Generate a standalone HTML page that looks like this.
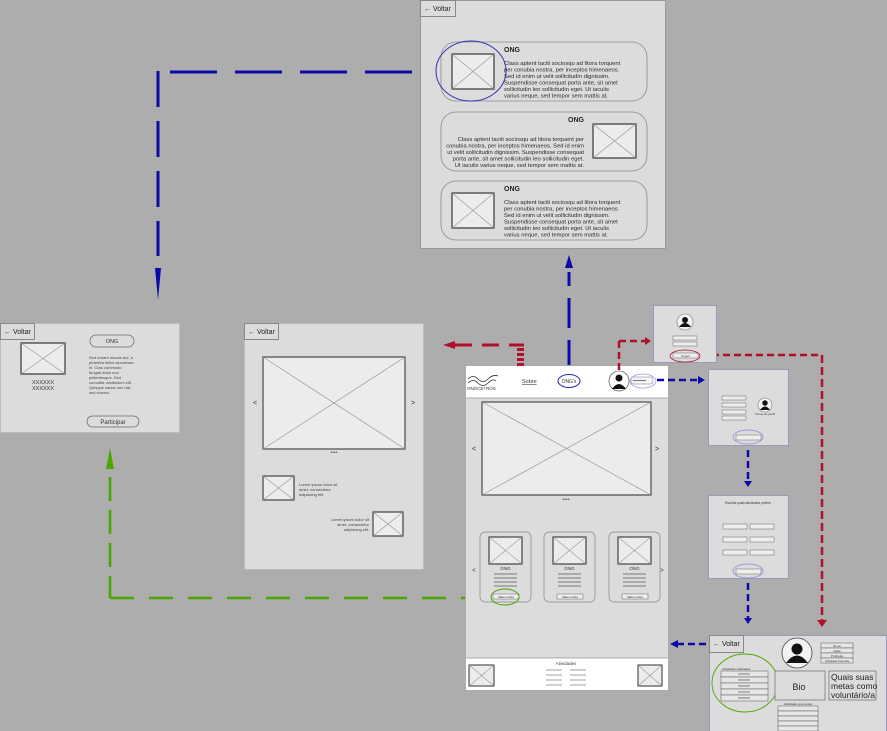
<!DOCTYPE html>
<html><head><meta charset="utf-8"><style>
html,body{margin:0;padding:0;background:#adadad}
svg{display:block}
text{font-family:"Liberation Sans",sans-serif}
</style></head><body>
<svg width="887" height="731" viewBox="0 0 887 731" xmlns="http://www.w3.org/2000/svg">
<rect width="887" height="731" fill="#adadad"/>

<!-- Top panel -->
<rect x="420.5" y="0.5" width="245" height="248" fill="#dcdcdc" stroke="#999"/>
<rect x="420.5" y="0.5" width="35" height="16" fill="#dcdcdc" stroke="#888"/>
<text x="424" y="11" font-size="7" fill="#222">← Voltar</text>
<g fill="none" stroke="#8a8a8a" stroke-width="0.8">
<rect x="441" y="42" width="206" height="59" rx="15"/>
<rect x="441" y="112" width="206" height="59" rx="15"/>
<rect x="441" y="181" width="206" height="59" rx="15"/>
</g>
<g stroke="#444" stroke-width="1.3" fill="#ececec">
<rect x="452" y="54" width="42" height="35"/>
<rect x="593" y="124" width="43" height="34"/>
<rect x="452" y="193" width="42" height="35"/>
</g>
<g stroke="#999" stroke-width="0.7">
<line x1="452" y1="54" x2="494" y2="89"/><line x1="494" y1="54" x2="452" y2="89"/>
<line x1="593" y1="124" x2="636" y2="158"/><line x1="636" y1="124" x2="593" y2="158"/>
<line x1="452" y1="193" x2="494" y2="228"/><line x1="494" y1="193" x2="452" y2="228"/>
</g>
<ellipse cx="471" cy="71" rx="35" ry="30" fill="none" stroke="#3333bb" stroke-width="1"/>
<g font-size="5.85" fill="#2a2a2a">
<text x="504" y="52" font-size="7" font-weight="bold" fill="#222">ONG</text>
<text x="504" y="65">Class aptent taciti sociosqu ad litora torquent</text>
<text x="504" y="71.5">per conubia nostra, per inceptos himenaeos.</text>
<text x="504" y="78">Sed id enim ut velit sollicitudin dignissim.</text>
<text x="504" y="84.5">Suspendisse consequat porta ante, sit amet</text>
<text x="504" y="91">sollicitudin leo sollicitudin eget. Ut iaculis</text>
<text x="504" y="97.5">varius neque, sed tempor sem mattis at.</text>
<g text-anchor="end">
<text x="584" y="122" font-size="7" font-weight="bold" fill="#222">ONG</text>
<text x="584" y="141">Class aptent taciti sociosqu ad litora torquent per</text>
<text x="584" y="147.5">conubia nostra, per inceptos himenaeos. Sed id enim</text>
<text x="584" y="154">ut velit sollicitudin dignissim. Suspendisse consequat</text>
<text x="584" y="160.5">porta ante, sit amet sollicitudin leo sollicitudin eget.</text>
<text x="584" y="167">Ut iaculis varius neque, sed tempor sem mattis at.</text>
</g>
<text x="504" y="191" font-size="7" font-weight="bold" fill="#222">ONG</text>
<text x="504" y="204">Class aptent taciti sociosqu ad litora torquent</text>
<text x="504" y="210.5">per conubia nostra, per inceptos himenaeos.</text>
<text x="504" y="217">Sed id enim ut velit sollicitudin dignissim.</text>
<text x="504" y="223.5">Suspendisse consequat porta ante, sit amet</text>
<text x="504" y="230">sollicitudin leo sollicitudin eget. Ut iaculis</text>
<text x="504" y="236.5">varius neque, sed tempor sem mattis at.</text>
</g>

<!-- Blue dashed top-left -->
<g stroke="#0a0aa8" stroke-width="3" fill="none">
<line x1="170" y1="72" x2="413" y2="72" stroke-dasharray="47,18"/>
<line x1="158" y1="71" x2="158" y2="256" stroke-dasharray="36,14"/>
<line x1="569" y1="370" x2="569" y2="272" stroke-dasharray="30,12"/>
</g>
<polygon points="155,268 161,268 158,300" fill="#0a0aa8"/>
<polygon points="565,268 573,268 569,255" fill="#0a0aa8"/>

<!-- Left panel 1 -->
<rect x="0.5" y="323.5" width="179" height="109" fill="#dcdcdc" stroke="#bbb"/>
<rect x="0.5" y="323.5" width="34" height="16" fill="#dcdcdc" stroke="#888"/>
<text x="4" y="334" font-size="7" fill="#222">← Voltar</text>
<rect x="21" y="343" width="44" height="31" fill="#ececec" stroke="#444" stroke-width="1.3"/>
<line x1="21" y1="343" x2="65" y2="374" stroke="#999" stroke-width="0.7"/><line x1="65" y1="343" x2="21" y2="374" stroke="#999" stroke-width="0.7"/>
<text x="43" y="384" font-size="5.5" fill="#333" text-anchor="middle">XXXXXX</text>
<text x="43" y="390" font-size="5.5" fill="#333" text-anchor="middle">XXXXXX</text>
<rect x="90" y="335" width="44" height="12" rx="6" fill="none" stroke="#666" stroke-width="0.7"/>
<text x="112" y="343" font-size="5.5" fill="#333" text-anchor="middle">ONG</text>
<g font-size="4" fill="#444">
<text x="89" y="359">Sed ornare mauris dui, a</text>
<text x="89" y="364">pharetra tellus accumsan</text>
<text x="89" y="369">in. Cras commodo</text>
<text x="89" y="374">feugiat dolor non</text>
<text x="89" y="379">pellentesque. Sed</text>
<text x="89" y="384">convallis vestibulum elit.</text>
<text x="89" y="389">Quisque varius nec nisi</text>
<text x="89" y="394">sed viverra.</text>
</g>
<rect x="87" y="416" width="52" height="11" rx="5.5" fill="none" stroke="#666" stroke-width="0.7"/>
<text x="113" y="424" font-size="6" fill="#333" text-anchor="middle">Participar</text>

<!-- Panel 2 -->
<rect x="244.5" y="323.5" width="179" height="246" fill="#dcdcdc" stroke="#bbb"/>
<rect x="244.5" y="323.5" width="34" height="16" fill="#dcdcdc" stroke="#888"/>
<text x="248" y="334" font-size="7" fill="#222">← Voltar</text>
<rect x="263" y="357" width="142" height="92" fill="#ececec" stroke="#555" stroke-width="1.3"/>
<line x1="263" y1="357" x2="405" y2="449" stroke="#999" stroke-width="0.7"/><line x1="405" y1="357" x2="263" y2="449" stroke="#999" stroke-width="0.7"/>
<text x="255" y="405" font-size="7" fill="#333" text-anchor="middle">&lt;</text>
<text x="413" y="405" font-size="7" fill="#333" text-anchor="middle">&gt;</text>
<text x="334" y="454" font-size="5" fill="#555" text-anchor="middle">••••</text>
<rect x="263" y="476" width="31" height="24" fill="#ececec" stroke="#444" stroke-width="1.2"/>
<line x1="263" y1="476" x2="294" y2="500" stroke="#999" stroke-width="0.7"/><line x1="294" y1="476" x2="263" y2="500" stroke="#999" stroke-width="0.7"/>
<g font-size="4" fill="#444"><text x="299" y="486">Lorem ipsum dolor sit</text><text x="299" y="491">amet, consectetur</text><text x="299" y="496">adipiscing elit.</text></g>
<rect x="373" y="512" width="30" height="24" fill="#ececec" stroke="#444" stroke-width="1.2"/>
<line x1="373" y1="512" x2="403" y2="536" stroke="#999" stroke-width="0.7"/><line x1="403" y1="512" x2="373" y2="536" stroke="#999" stroke-width="0.7"/>
<g font-size="4" fill="#444" text-anchor="end"><text x="369" y="521">Lorem ipsum dolor sit</text><text x="369" y="526">amet, consectetur</text><text x="369" y="531">adipiscing elit.</text></g>

<!-- Green -->
<g stroke="#4aa600" stroke-width="2.6" fill="none">
<line x1="110" y1="477" x2="110" y2="598" stroke-dasharray="24,9"/>
<line x1="110" y1="598" x2="490" y2="598" stroke-dasharray="24,15"/>
</g>
<polygon points="106,469 114,469 110,448" fill="#4aa600"/>

<!-- Main panel -->
<rect x="465.5" y="365.5" width="203" height="325" fill="#dcdcdc" stroke="#aaa"/>
<rect x="466" y="366" width="202" height="32" fill="#fff"/>
<line x1="466" y1="398" x2="668" y2="398" stroke="#999" stroke-width="0.8"/>
<path d="M468 379 q5 -5 10 0 t10 0 t10 -3 M468 383 q5 -5 10 0 t10 0 t8 -2" stroke="#333" stroke-width="0.8" fill="none"/>
<text x="467" y="390" font-size="4.5" fill="#333">ONGCEI ROS</text>
<text x="522" y="383" font-size="5.5" fill="#333" text-decoration="underline">Sobre</text>
<ellipse cx="569" cy="381" rx="11" ry="6.5" fill="none" stroke="#2a2ab0" stroke-width="1"/>
<text x="569" y="383" font-size="5" fill="#333" text-anchor="middle">ONG's</text>
<circle cx="619" cy="381" r="10" fill="#fff" stroke="#666" stroke-width="0.8"/>
<circle cx="619" cy="378" r="3.5" fill="#111"/>
<path d="M612 389 q7 -10 14 0 z" fill="#111"/>
<rect x="631" y="377" width="22" height="7" rx="2" fill="#f4f4f4" stroke="#777" stroke-width="0.5"/>
<line x1="633" y1="380.5" x2="646" y2="380.5" stroke="#555" stroke-width="0.8"/>
<ellipse cx="643" cy="381" rx="13" ry="7" fill="none" stroke="#9999dd" stroke-width="0.8"/>

<rect x="482" y="402" width="169" height="93" fill="#ececec" stroke="#555" stroke-width="1.3"/>
<line x1="482" y1="402" x2="651" y2="495" stroke="#999" stroke-width="0.7"/><line x1="651" y1="402" x2="482" y2="495" stroke="#999" stroke-width="0.7"/>
<text x="474" y="451" font-size="7" fill="#333" text-anchor="middle">&lt;</text>
<text x="657" y="451" font-size="7" fill="#333" text-anchor="middle">&gt;</text>
<text x="566" y="501" font-size="5" fill="#555" text-anchor="middle">••••</text>
<text x="474" y="572" font-size="6" fill="#333" text-anchor="middle">&lt;</text>
<text x="662" y="572" font-size="6" fill="#333" text-anchor="middle">&gt;</text>

<g id="card">
<rect x="480" y="532" width="51" height="70" rx="5" fill="none" stroke="#888" stroke-width="0.7"/>
<rect x="489" y="537" width="33" height="27" fill="#ececec" stroke="#444" stroke-width="1.2"/>
<line x1="489" y1="537" x2="522" y2="564" stroke="#999" stroke-width="0.6"/><line x1="522" y1="537" x2="489" y2="564" stroke="#999" stroke-width="0.6"/>
<text x="505.5" y="570" font-size="4.5" fill="#333" text-anchor="middle">ONG</text>
<g stroke="#777" stroke-width="0.9"><line x1="494" y1="574" x2="517" y2="574"/><line x1="494" y1="578" x2="517" y2="578"/><line x1="494" y1="582" x2="517" y2="582"/><line x1="494" y1="586" x2="517" y2="586"/></g>
<rect x="493" y="594" width="26" height="5" fill="#eee" stroke="#666" stroke-width="0.5"/>
<text x="506" y="598" font-size="3" fill="#333" text-anchor="middle">Saber sobre</text>
</g>
<use href="#card" x="64"/>
<use href="#card" x="129"/>
<ellipse cx="505" cy="597" rx="14" ry="8" fill="none" stroke="#4aa600" stroke-width="1"/>

<rect x="466" y="658" width="202" height="32" fill="#fff"/>
<line x1="466" y1="658" x2="668" y2="658" stroke="#999" stroke-width="0.8"/>
<rect x="469" y="665" width="25" height="21" fill="#ececec" stroke="#444" stroke-width="1.1"/>
<line x1="469" y1="665" x2="494" y2="686" stroke="#999" stroke-width="0.6"/><line x1="494" y1="665" x2="469" y2="686" stroke="#999" stroke-width="0.6"/>
<rect x="638" y="665" width="24" height="21" fill="#ececec" stroke="#444" stroke-width="1.1"/>
<line x1="638" y1="665" x2="662" y2="686" stroke="#999" stroke-width="0.6"/><line x1="662" y1="665" x2="638" y2="686" stroke="#999" stroke-width="0.6"/>
<text x="566" y="665" font-size="4.5" fill="#444" text-anchor="middle">Atividades</text>
<g stroke="#888" stroke-width="0.8"><line x1="546" y1="670" x2="562" y2="670"/><line x1="570" y1="670" x2="586" y2="670"/><line x1="546" y1="675" x2="562" y2="675"/><line x1="570" y1="675" x2="586" y2="675"/><line x1="546" y1="680" x2="562" y2="680"/><line x1="570" y1="680" x2="586" y2="680"/><line x1="546" y1="685" x2="562" y2="685"/><line x1="570" y1="685" x2="586" y2="685"/></g>

<!-- Red lines -->
<g stroke="#b0102a" fill="none">
<line x1="455" y1="345" x2="524" y2="345" stroke-width="3" stroke-dasharray="17,10"/>
<line x1="520.5" y1="348" x2="520.5" y2="366" stroke-width="7" stroke-dasharray="3,2"/>
<line x1="619" y1="370" x2="619" y2="341" stroke-width="2.5" stroke-dasharray="7,4"/>
<line x1="619" y1="341" x2="645" y2="341" stroke-width="2.5" stroke-dasharray="7,4"/>
<line x1="701" y1="355" x2="822" y2="355" stroke-width="2.5" stroke-dasharray="7,4"/>
<line x1="822" y1="355" x2="822" y2="620" stroke-width="2.5" stroke-dasharray="8,4"/>
</g>
<polygon points="455,341 455,349 443,345" fill="#b0102a"/>
<polygon points="645,337 645,345 651,341" fill="#b0102a"/>
<polygon points="817,620 827,620 822,627" fill="#b0102a"/>

<!-- Blue right chain -->
<g stroke="#0a0aa8" fill="none" stroke-width="2.5">
<line x1="657" y1="380" x2="698" y2="380" stroke-dasharray="7,4"/>
<line x1="748" y1="450" x2="748" y2="480" stroke-dasharray="7,4"/>
<line x1="748" y1="583" x2="748" y2="618" stroke-dasharray="7,4"/>
<line x1="706" y1="644" x2="678" y2="644" stroke-dasharray="7,4"/>
</g>
<polygon points="698,376 698,384 705,380" fill="#0a0aa8"/>
<polygon points="744,481 752,481 748,487" fill="#0a0aa8"/>
<polygon points="744,618 752,618 748,624" fill="#0a0aa8"/>
<polygon points="678,640 678,648 670,644" fill="#0a0aa8"/>

<!-- Small panel top right -->
<rect x="653.5" y="305.5" width="63" height="57" fill="#dcdcdc" stroke="#8888bb" stroke-width="0.7"/>
<circle cx="685" cy="322" r="8" fill="#f2f2f2" stroke="#777" stroke-width="0.6"/>
<circle cx="685" cy="320" r="3" fill="#111"/><path d="M679 327 q6 -8 12 0 z" fill="#111"/>
<rect x="673" y="336" width="24" height="4" fill="#eee" stroke="#666" stroke-width="0.5"/>
<rect x="673" y="342" width="24" height="4" fill="#eee" stroke="#666" stroke-width="0.5"/>
<rect x="673" y="353" width="25" height="5" fill="#eee" stroke="#666" stroke-width="0.5"/>
<text x="685.5" y="357" font-size="3" fill="#333" text-anchor="middle">Seguir</text>
<ellipse cx="685" cy="356" rx="15" ry="6" fill="none" stroke="#b0102a" stroke-width="0.8"/>

<!-- Panel signup -->
<rect x="708.5" y="369.5" width="80" height="76" fill="#dcdcdc" stroke="#8888bb" stroke-width="0.7"/>
<g fill="#eee" stroke="#666" stroke-width="0.5">
<rect x="722" y="396" width="24" height="4"/><rect x="722" y="403" width="24" height="4"/><rect x="722" y="410" width="24" height="4"/><rect x="722" y="416" width="24" height="4"/>
</g>
<circle cx="765" cy="405" r="7" fill="#f2f2f2" stroke="#777" stroke-width="0.6"/>
<circle cx="765" cy="403" r="2.7" fill="#111"/><path d="M760 410 q5 -7 10 0 z" fill="#111"/>
<text x="765" y="415" font-size="3" fill="#333" text-anchor="middle">Nome do perfil</text>
<rect x="736" y="435" width="25" height="5" fill="#eee" stroke="#666" stroke-width="0.5"/>
<ellipse cx="748" cy="437" rx="15" ry="7" fill="none" stroke="#8888dd" stroke-width="0.8"/>

<!-- Panel activities -->
<rect x="708.5" y="495.5" width="80" height="83" fill="#dcdcdc" stroke="#8888bb" stroke-width="0.7"/>
<text x="748" y="504" font-size="3.2" fill="#333" text-anchor="middle">Escolha quais atividades prefere</text>
<g fill="#eee" stroke="#666" stroke-width="0.5">
<rect x="723" y="524" width="24" height="5"/><rect x="750" y="524" width="24" height="5"/>
<rect x="723" y="537" width="24" height="5"/><rect x="750" y="537" width="24" height="5"/>
<rect x="723" y="550" width="24" height="5"/><rect x="750" y="550" width="24" height="5"/>
<rect x="736" y="569" width="25" height="5"/>
</g>
<ellipse cx="748" cy="571" rx="15" ry="7" fill="none" stroke="#8888dd" stroke-width="0.8"/>

<!-- Bottom profile panel -->
<rect x="709.5" y="635.5" width="177" height="96" fill="#dcdcdc" stroke="#8888bb" stroke-width="0.7"/>
<rect x="709.5" y="635.5" width="34" height="17" fill="#dcdcdc" stroke="#888"/>
<text x="713" y="646" font-size="7" fill="#222">← Voltar</text>
<circle cx="797" cy="653" r="15" fill="#f2f2f2" stroke="#444" stroke-width="0.8"/>
<circle cx="797" cy="649" r="5.5" fill="#111"/><path d="M786 663 q11 -15 22 0 z" fill="#111"/>
<g fill="#e6e6e6" stroke="#555" stroke-width="0.5">
<rect x="821" y="643" width="32" height="5"/><rect x="821" y="648" width="32" height="5"/><rect x="821" y="653" width="32" height="5"/><rect x="821" y="658" width="32" height="5"/>
</g>
<g font-size="3" fill="#333" text-anchor="middle"><text x="837" y="647">Nome</text><text x="837" y="652">Idade</text><text x="837" y="657">Profissão</text><text x="837" y="662">Atividade Favorita</text></g>
<text x="722" y="670" font-size="3" fill="#333">Atividades realizadas</text>
<g fill="#e6e6e6" stroke="#555" stroke-width="0.5">
<rect x="721" y="671" width="47" height="6"/><rect x="721" y="677" width="47" height="6"/><rect x="721" y="683" width="47" height="6"/><rect x="721" y="689" width="47" height="6"/><rect x="721" y="695" width="47" height="6"/>
</g>
<g font-size="3" fill="#333" text-anchor="middle"><text x="744" y="675">XXXXXX</text><text x="744" y="681">XXXXXX</text><text x="744" y="687">XXXXXX</text><text x="744" y="693">XXXXXX</text><text x="744" y="699">XXXXXX</text></g>
<ellipse cx="745" cy="683" rx="33" ry="29" fill="none" stroke="#4aa600" stroke-width="0.9"/>
<rect x="775" y="671" width="50" height="29" fill="#dcdcdc" stroke="#555" stroke-width="0.6"/>
<text x="799" y="690" font-size="9" fill="#222" text-anchor="middle">Bio</text>
<rect x="829" y="671" width="47" height="29" fill="#dcdcdc" stroke="#555" stroke-width="0.6"/>
<g font-size="8.5" fill="#222"><text x="831" y="680">Quais suas</text><text x="831" y="689">metas como</text><text x="831" y="698">voluntário/a</text></g>
<text x="798" y="705" font-size="3" fill="#333" text-anchor="middle">Atividades que gostei</text>
<g fill="#e6e6e6" stroke="#555" stroke-width="0.5">
<rect x="778" y="706" width="40" height="5"/><rect x="778" y="711" width="40" height="5"/><rect x="778" y="716" width="40" height="5"/><rect x="778" y="721" width="40" height="5"/><rect x="778" y="726" width="40" height="5"/>
</g>
</svg>
</body></html>
